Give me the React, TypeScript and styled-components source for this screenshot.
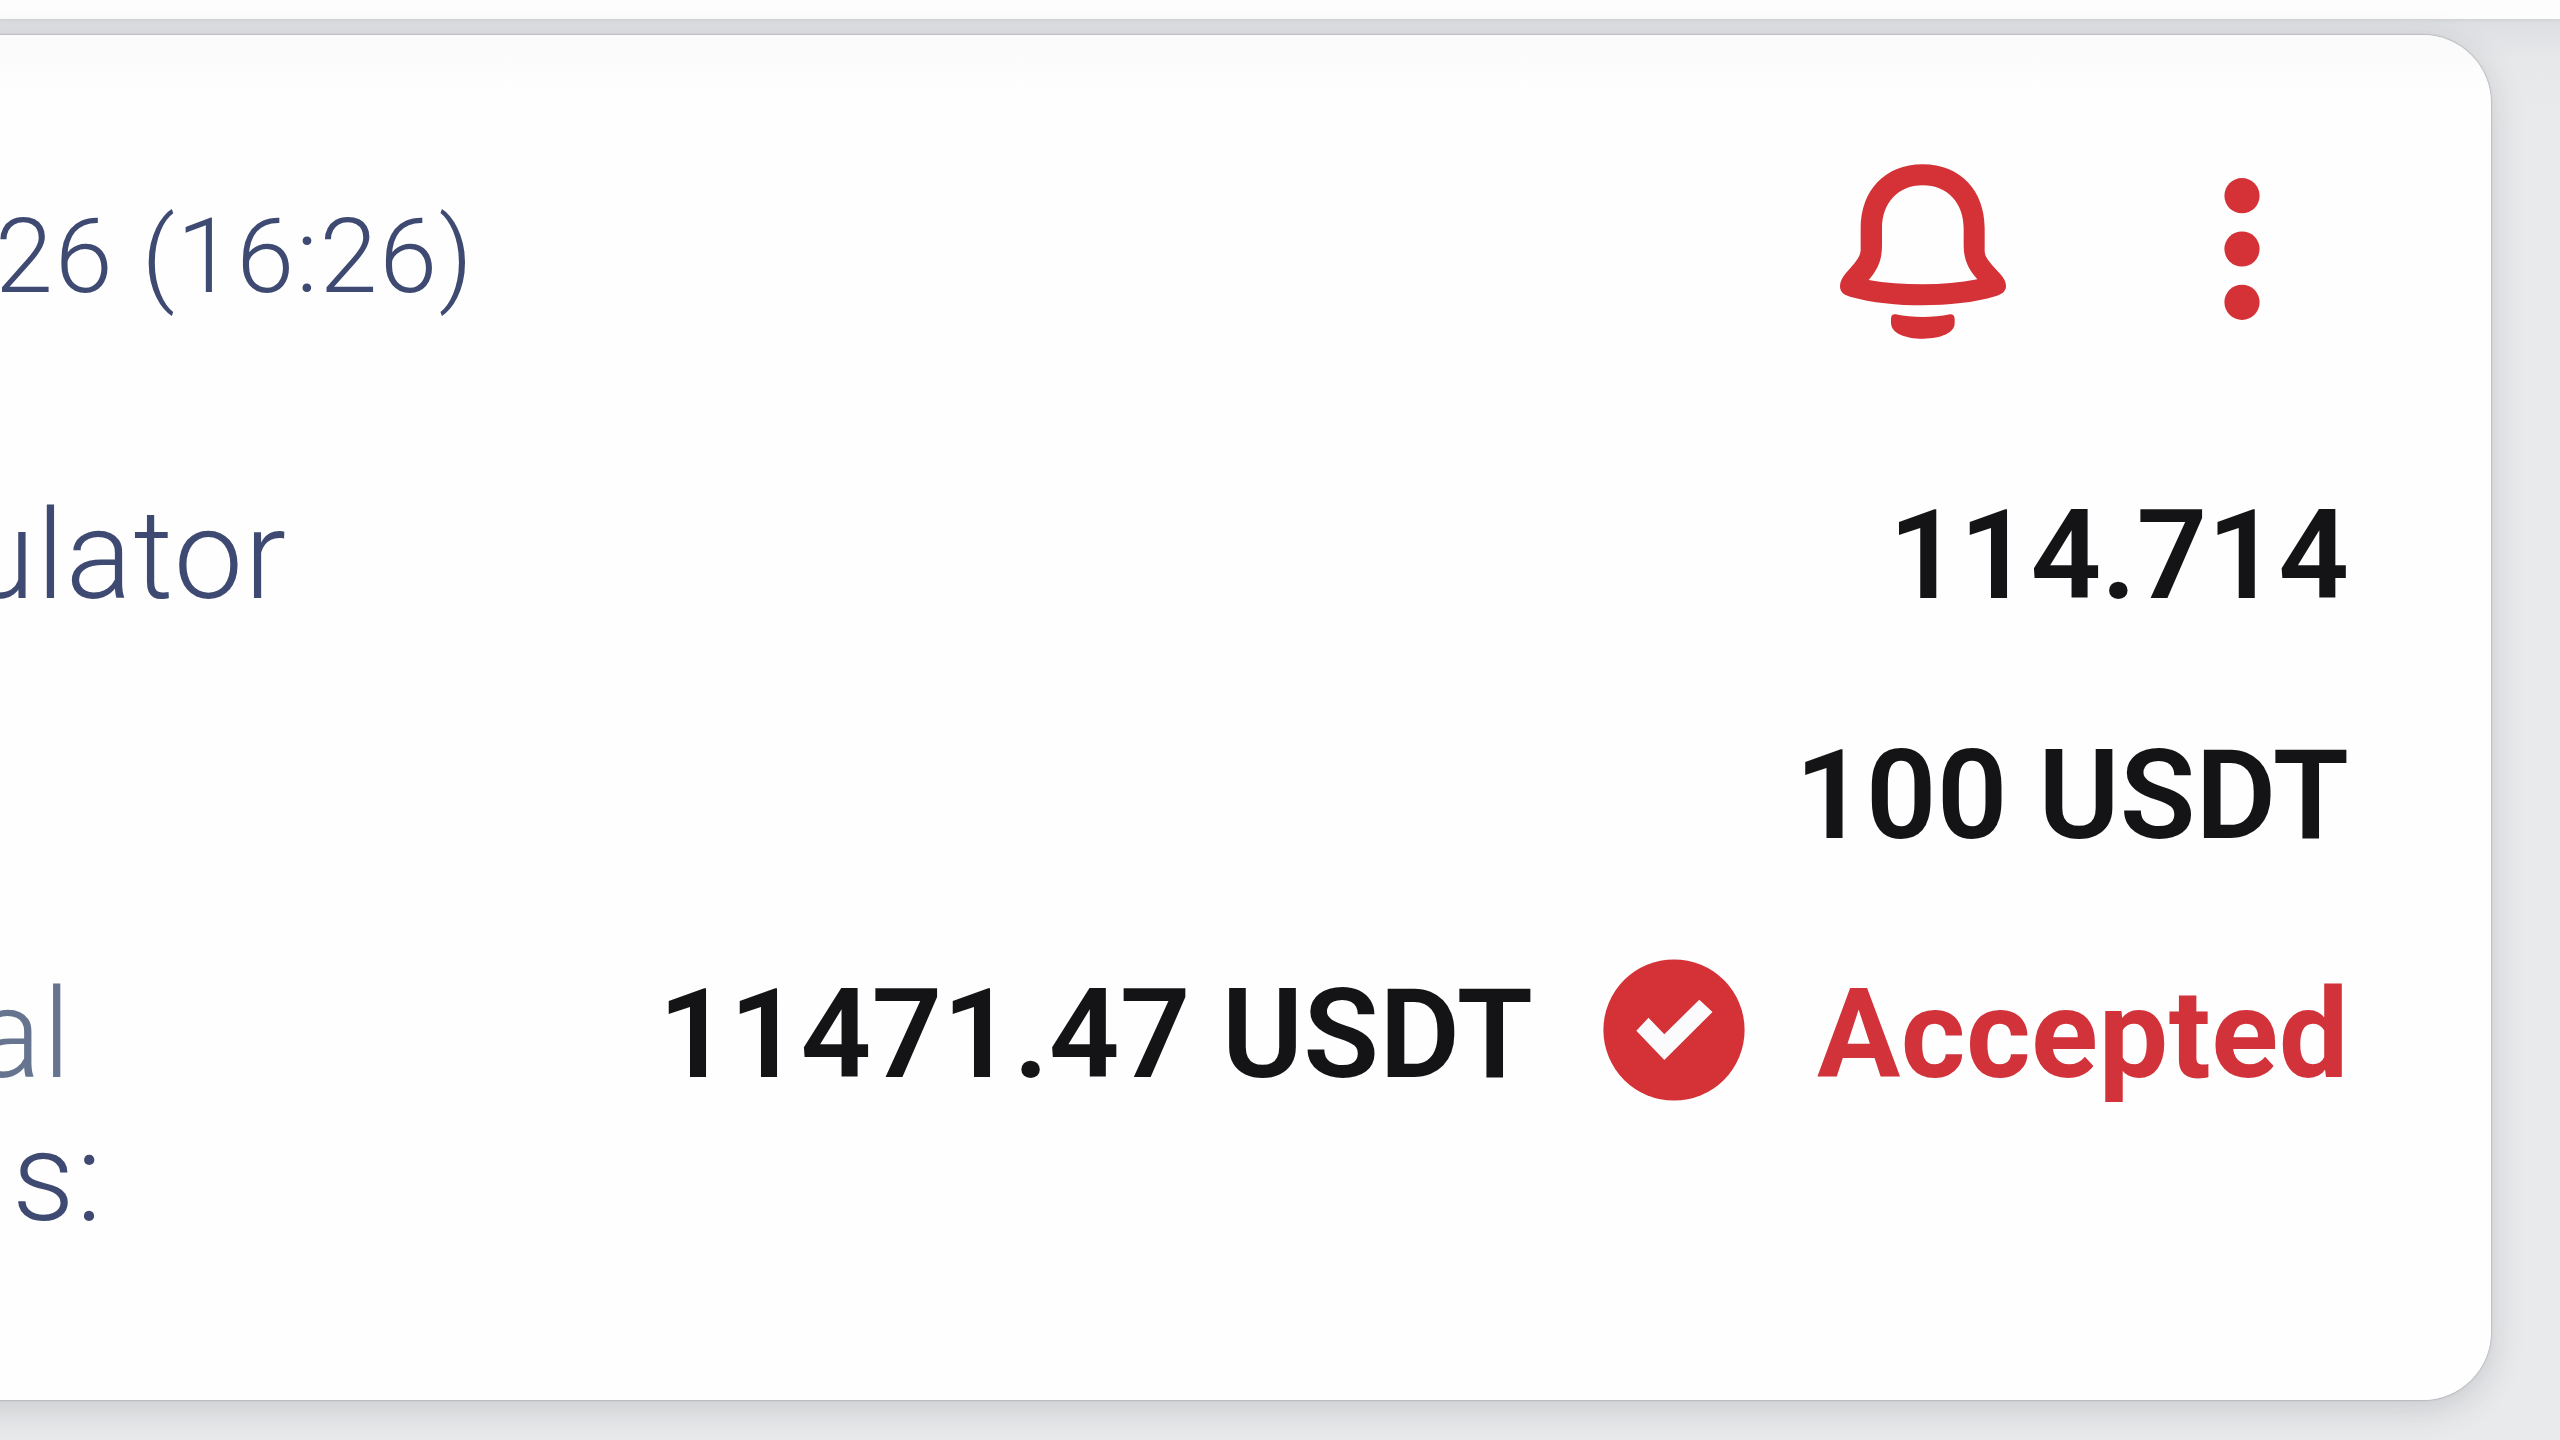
import React from "react";
import styled, { createGlobalStyle } from "styled-components";

const GlobalStyle = createGlobalStyle`
  * { box-sizing: border-box; }
  html, body { margin: 0; padding: 0; overflow: hidden; }
  body { font-family: Roboto, "Noto Sans", sans-serif; }
`;

const Page = styled.div`
  width: 2560px;
  height: 1440px;
  overflow: hidden;
  display: flex;
  flex-direction: column;
  align-items: flex-start;
  gap: 16px;
  background: linear-gradient(180deg, #dcdee1 19px, #e7e8ea 60px, #e9eaec 120px);
`;

const PreviousCard = styled.div`
  flex: none;
  width: 100%;
  height: 19px;
  background: #fdfdfd;
  box-shadow: 0 1px 3px rgba(70, 74, 84, 0.1);
`;

const Card = styled.article`
  flex: none;
  width: 2571px;
  height: 1365px;
  margin-left: -80px;
  padding: 100px 142px 0 80px;
  border-radius: 0 68px 68px 0;
  background: linear-gradient(180deg, #fafafa 0, #fefefe 56px, #fefefe 100%);
  box-shadow: 0 0 2px rgba(60, 64, 72, 0.55), 0 8px 34px rgba(60, 64, 72, 0.2);
  display: flex;
  flex-direction: column;
`;

const CardHeader = styled.header`
  height: 349px;
  display: flex;
  justify-content: space-between;
  align-items: flex-start;
`;

const DateText = styled.time`
  margin: 61px 0 0 -5px;
  font-size: 104.5px;
  line-height: 121px;
  font-weight: 320;
  letter-spacing: 1.7px;
  color: #3e4a72;
  white-space: pre;
`;

const Actions = styled.div`
  display: flex;
  align-items: flex-start;
  gap: 218px;
  padding: 28.5px 89px 0 0;
`;

const ActionButton = styled.button<{ $drop?: number }>`
  display: block;
  margin: ${(p) => p.$drop ?? 0}px 0 0;
  padding: 0;
  border: 0;
  background: none;
  color: #d43237;
  svg { display: block; }
`;

const Row = styled.div`
  display: flex;
  justify-content: space-between;
  align-items: flex-start;
  height: 239.5px;
`;

const Label = styled.div<{ $shift: number; $faded?: boolean }>`
  margin-left: ${(p) => p.$shift}px;
  font-size: 123.5px;
  line-height: 143px;
  font-weight: 330;
  letter-spacing: 1.6px;
  color: ${(p) => (p.$faded ? "#66748f" : "#3e4a72")};
  white-space: nowrap;
`;

const Labels = styled.div`
  display: flex;
  flex-direction: column;
`;

const Value = styled.div`
  font-size: 124px;
  line-height: 143px;
  font-weight: 600;
  color: #141315;
  white-space: nowrap;
`;

const Result = styled.div`
  display: flex;
  align-items: flex-start;
`;

const Amount = styled(Value)`
  letter-spacing: 0.15px;
`;

const StatusIcon = styled.svg`
  display: block;
  margin: -4px 72px 0 70px;
`;

const Status = styled(Value)`
  font-weight: 700;
  letter-spacing: 0.5px;
  color: #d2323a;
`;

const BellIcon = () => (
  <svg width="166" height="175" viewBox="120 70 498 525" fill="currentColor">
    <path
      fillRule="evenodd"
      d="M368 71C254 71 182 151 182 263V328C182 350 160 372 138 397C127 410 120 423 120 436C120 453 130 462 150 468C215 486 292 494 368 494C444 494 524 486 586 467C606 461 618 452 618 436C618 421 609 409 598 397C575 371 554 352 554 332V263C554 151 482 71 368 71ZM368 134C293 134 246 188 246 263V315C246 358 233 387 206 418C255 427 310 431 368 431C426 431 480 426 532 416C506 386 491 358 491 315V263C491 188 444 134 368 134Z"
    />
    <path d="M287 521C338 532 399 532 450 521C459 520 464 526 464 535V548C464 576 424 594 370 594C312 594 273 576 273 546V535C273 524 278 520 287 521Z" />
  </svg>
);

const MoreIcon = () => (
  <svg width="36" height="142" viewBox="0 0 36 142" fill="currentColor">
    <circle cx="18" cy="17.7" r="17.6" />
    <circle cx="18" cy="71" r="17.6" />
    <circle cx="18" cy="124.3" r="17.6" />
  </svg>
);

export default function App() {
  return (
    <>
      <GlobalStyle />
      <Page>
        <PreviousCard />
        <Card>
          <CardHeader>
            <DateText>26 (16:26)</DateText>
            <Actions>
              <ActionButton aria-label="Notifications">
                <BellIcon />
              </ActionButton>
              <ActionButton aria-label="More" $drop={14}>
                <MoreIcon />
              </ActionButton>
            </Actions>
          </CardHeader>
          <Row>
            <Label $shift={-33}>ulator</Label>
            <Value>114.714</Value>
          </Row>
          <Row>
            <span />
            <Value>100 USDT</Value>
          </Row>
          <Row>
            <Labels>
              <Label $shift={-25} $faded>al</Label>
              <Label $shift={12}>s:</Label>
            </Labels>
            <Result>
              <Amount>11471.47 USDT</Amount>
              <StatusIcon width="142" height="142" viewBox="0 0 142 142">
                <circle cx="71" cy="71" r="70.6" fill="#d43237" />
                <path
                  d="M33.3 71.7L45.5 58.7L61.3 75.3L96.3 40.7L109.5 53L61.3 101Z"
                  fill="#fbfafc"
                />
              </StatusIcon>
              <Status>Accepted</Status>
            </Result>
          </Row>
        </Card>
      </Page>
    </>
  );
}
